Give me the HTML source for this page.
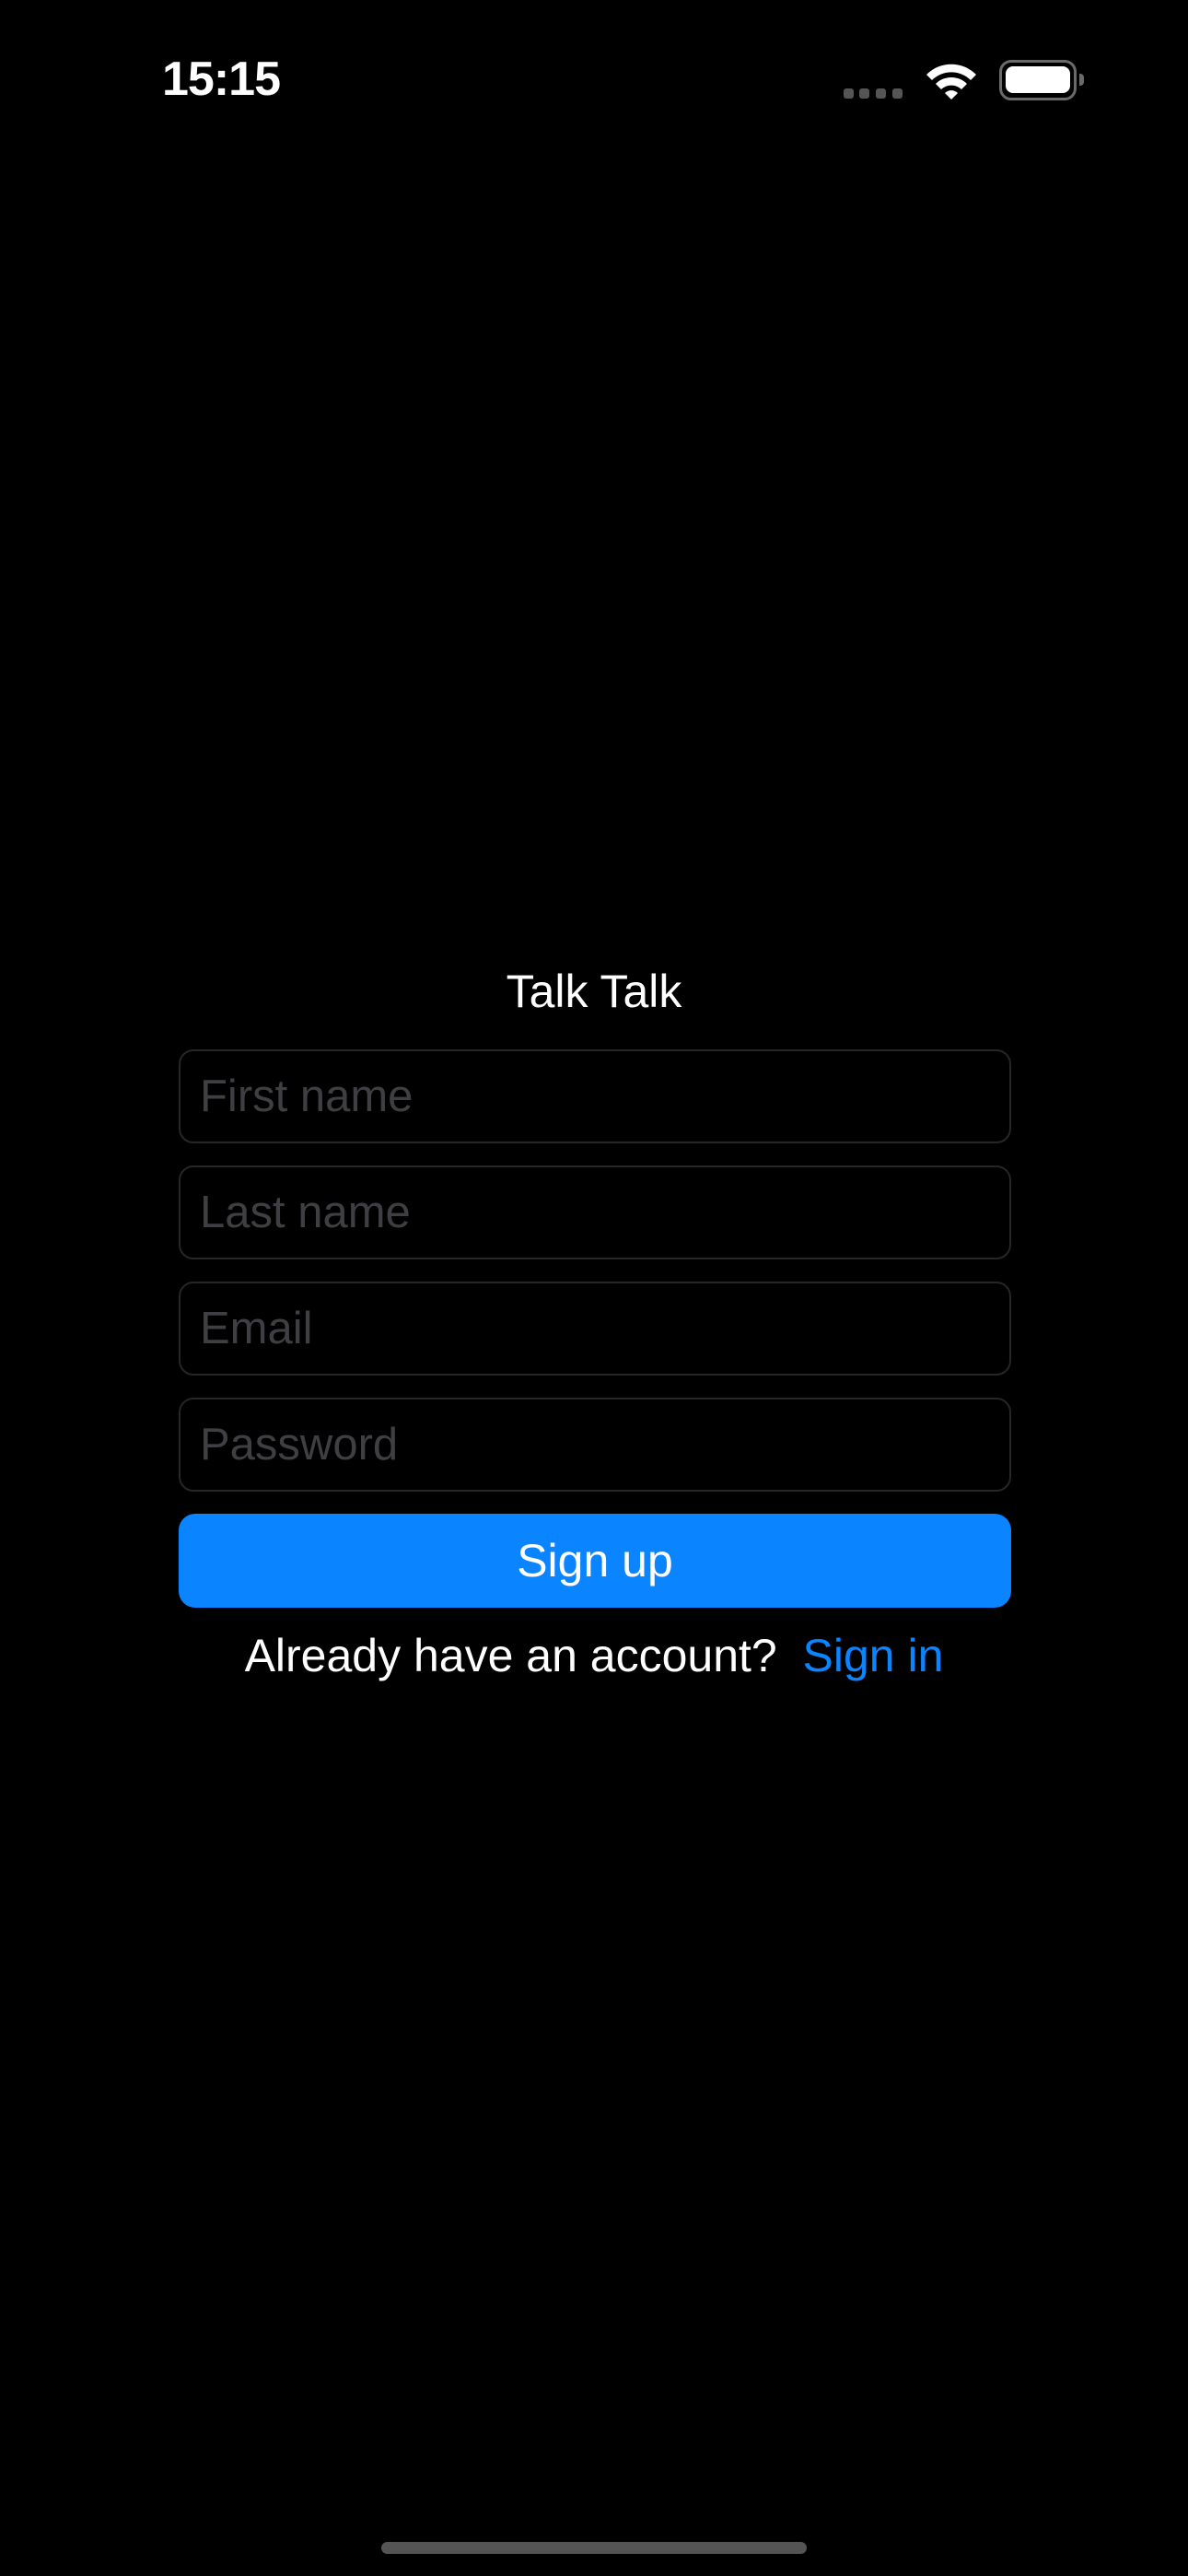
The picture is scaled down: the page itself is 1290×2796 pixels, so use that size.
<!DOCTYPE html>
<html><head><meta charset="utf-8"><style>
html,body{margin:0;padding:0;background:#000;}
body{width:1290px;height:2796px;position:relative;overflow:hidden;font-family:"Liberation Sans",sans-serif;}
.abs{position:absolute;}
.field{position:absolute;left:194px;width:900px;height:98px;border:2px solid #262628;border-radius:16px;}
.ph{position:absolute;left:21px;top:0;line-height:98px;font-size:49px;color:#3f3f43;}
</style></head><body>
<div class="abs" style="left:176px;top:56px;font-size:52px;font-weight:bold;color:#fff;line-height:60px;letter-spacing:-1px;">15:15</div>
<div class="abs" style="left:916px;top:96px;width:11px;height:11px;border-radius:3px;background:#555;"></div>
<div class="abs" style="left:933px;top:96px;width:11px;height:11px;border-radius:3px;background:#555;"></div>
<div class="abs" style="left:951px;top:96px;width:11px;height:11px;border-radius:3px;background:#555;"></div>
<div class="abs" style="left:969px;top:96px;width:11px;height:11px;border-radius:3px;background:#555;"></div>
<svg class="abs" style="left:1004px;top:64px" width="58" height="44" viewBox="0 0 58 44">
<path d="M2 17 A38 38 0 0 1 56 17 L50 23 A30 30 0 0 0 8 23 Z" fill="#fff"/>
<path d="M12 27 A24 24 0 0 1 46 27 L40 33 A16 16 0 0 0 18 33 Z" fill="#fff"/>
<path d="M22 37 A10 10 0 0 1 36 37 L29 44 Z" fill="#fff"/>
</svg>
<div class="abs" style="left:1085px;top:65px;width:78px;height:38px;border:3px solid #6a6a6a;border-radius:13px;"></div>
<div class="abs" style="left:1092px;top:72px;width:70px;height:29px;background:#fff;border-radius:8px;"></div>
<div class="abs" style="left:1172px;top:80px;width:5px;height:13px;background:#6a6a6a;border-radius:0 4px 4px 0;"></div>

<div class="abs" style="left:0;width:1290px;top:1046px;text-align:center;font-size:50px;color:#fff;line-height:60px;">Talk Talk</div>
<div class="field" style="top:1139px"><div class="ph">First name</div></div>
<div class="field" style="top:1265px"><div class="ph">Last name</div></div>
<div class="field" style="top:1391px"><div class="ph">Email</div></div>
<div class="field" style="top:1517px"><div class="ph">Password</div></div>
<div class="abs" style="left:194px;top:1643px;width:904px;height:102px;background:#0a84ff;border-radius:18px;color:#fff;font-size:50px;line-height:102px;text-align:center;">Sign up</div>
<div class="abs" style="left:0;width:1290px;top:1767px;text-align:center;font-size:50px;line-height:60px;color:#fff;white-space:pre;">Already have an account?  <span style="color:#0a84ff">Sign in</span></div>
<div class="abs" style="left:414px;top:2759px;width:462px;height:13px;border-radius:7px;background:#545454;"></div>
</body></html>
